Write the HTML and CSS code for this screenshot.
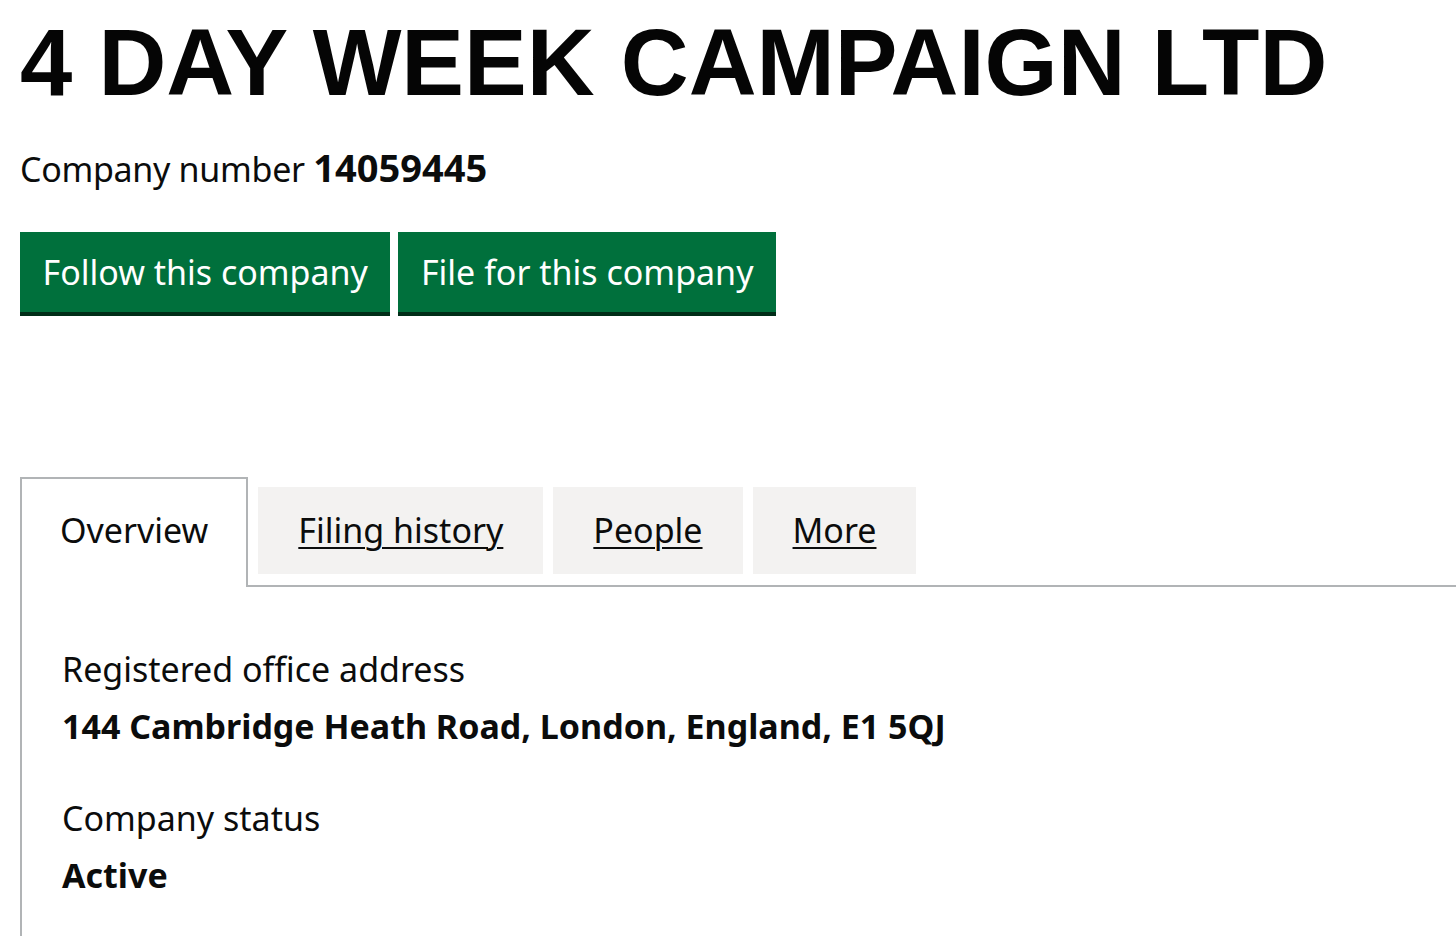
FILE: index.html
```html
<!DOCTYPE html>
<html lang="en">
<head>
<meta charset="utf-8">
<title>4 DAY WEEK CAMPAIGN LTD - Overview</title>
<link rel="stylesheet" href="styles.css">
</head>
<body>
<main class="page">
  <h1 class="company-name">4 DAY WEEK CAMPAIGN LTD</h1>
  <p class="company-number">Company number <strong>14059445</strong></p>
  <div class="actions">
    <a class="button" href="#">Follow this company</a>
    <a class="button" href="#">File for this company</a>
  </div>
  <div class="tabs">
    <ul class="tabs-list">
      <li class="tab tab-selected"><span class="tab-label">Overview</span></li>
      <li class="tab"><a class="tab-link" href="#">Filing history</a></li>
      <li class="tab"><a class="tab-link" href="#">People</a></li>
      <li class="tab"><a class="tab-link" href="#">More</a></li>
    </ul>
    <section class="tab-panel">
      <dl class="summary">
        <dt class="summary-key">Registered office address</dt>
        <dd class="summary-value">144 Cambridge Heath Road, London, England, E1 5QJ</dd>
        <dt class="summary-key summary-key-gap">Company status</dt>
        <dd class="summary-value">Active</dd>
      </dl>
    </section>
  </div>
</main>
</body>
</html>
```

FILE: styles.css
```css
html, body {
  margin: 0;
  padding: 0;
  background: #ffffff;
}

body {
  font-family: "Noto Sans", "Open Sans", Arial, sans-serif;
  color: #0b0c0c;
  font-size: 34px;
  line-height: 40px;
}

.page {
  padding: 0 0 0 20px;
}

.company-name {
  font-family: "Liberation Sans", Arial, sans-serif;
  font-weight: 700;
  font-size: 94px;
  line-height: 100px;
  margin: 13px 0 0 0;
  color: #050505;
}

.company-number {
  margin: 34px 0 0 0;
  font-size: 34px;
  line-height: 40px;
  letter-spacing: -0.3px;
}

.company-number strong {
  font-weight: 700;
  font-size: 38px;
  letter-spacing: 0;
}

.actions {
  display: flex;
  gap: 8px;
  margin-top: 43px;
}

.button {
  display: block;
  background: #00703c;
  color: #ffffff;
  text-decoration: none;
  padding: 20px 22.5px;
  line-height: 40px;
  box-shadow: 0 4px 0 #002d18;
}

.tabs {
  margin-top: 165px;
}

.tabs-list {
  list-style: none;
  margin: 0;
  padding: 0;
  display: flex;
  align-items: flex-start;
  gap: 10px;
}

.tab {
  background: #f3f2f1;
  margin-top: 10px;
  padding: 23px 40px 24px 40px;
  line-height: 40px;
}

.tab-selected {
  position: relative;
  z-index: 1;
  margin-top: 0;
  margin-bottom: -2px;
  background: #ffffff;
  border: 2px solid #b1b4b6;
  border-bottom: 0;
  padding: 31px 38px 37px 38px;
}

.tab-link {
  color: #0b0c0c;
  text-decoration: underline;
  text-decoration-thickness: 2px;
  text-underline-offset: 4px;
}

.tab-panel {
  border-top: 2px solid #b1b4b6;
  border-left: 2px solid #b1b4b6;
  padding: 62px 40px 60px 40px;
  min-height: 300px;
}

.summary {
  margin: 0;
}

.summary-key {
  margin: 0;
  line-height: 40px;
}

.summary-key-gap {
  margin-top: 52px;
}

.summary-value {
  margin: 17px 0 0 0;
  font-weight: 700;
  line-height: 40px;
}
```
